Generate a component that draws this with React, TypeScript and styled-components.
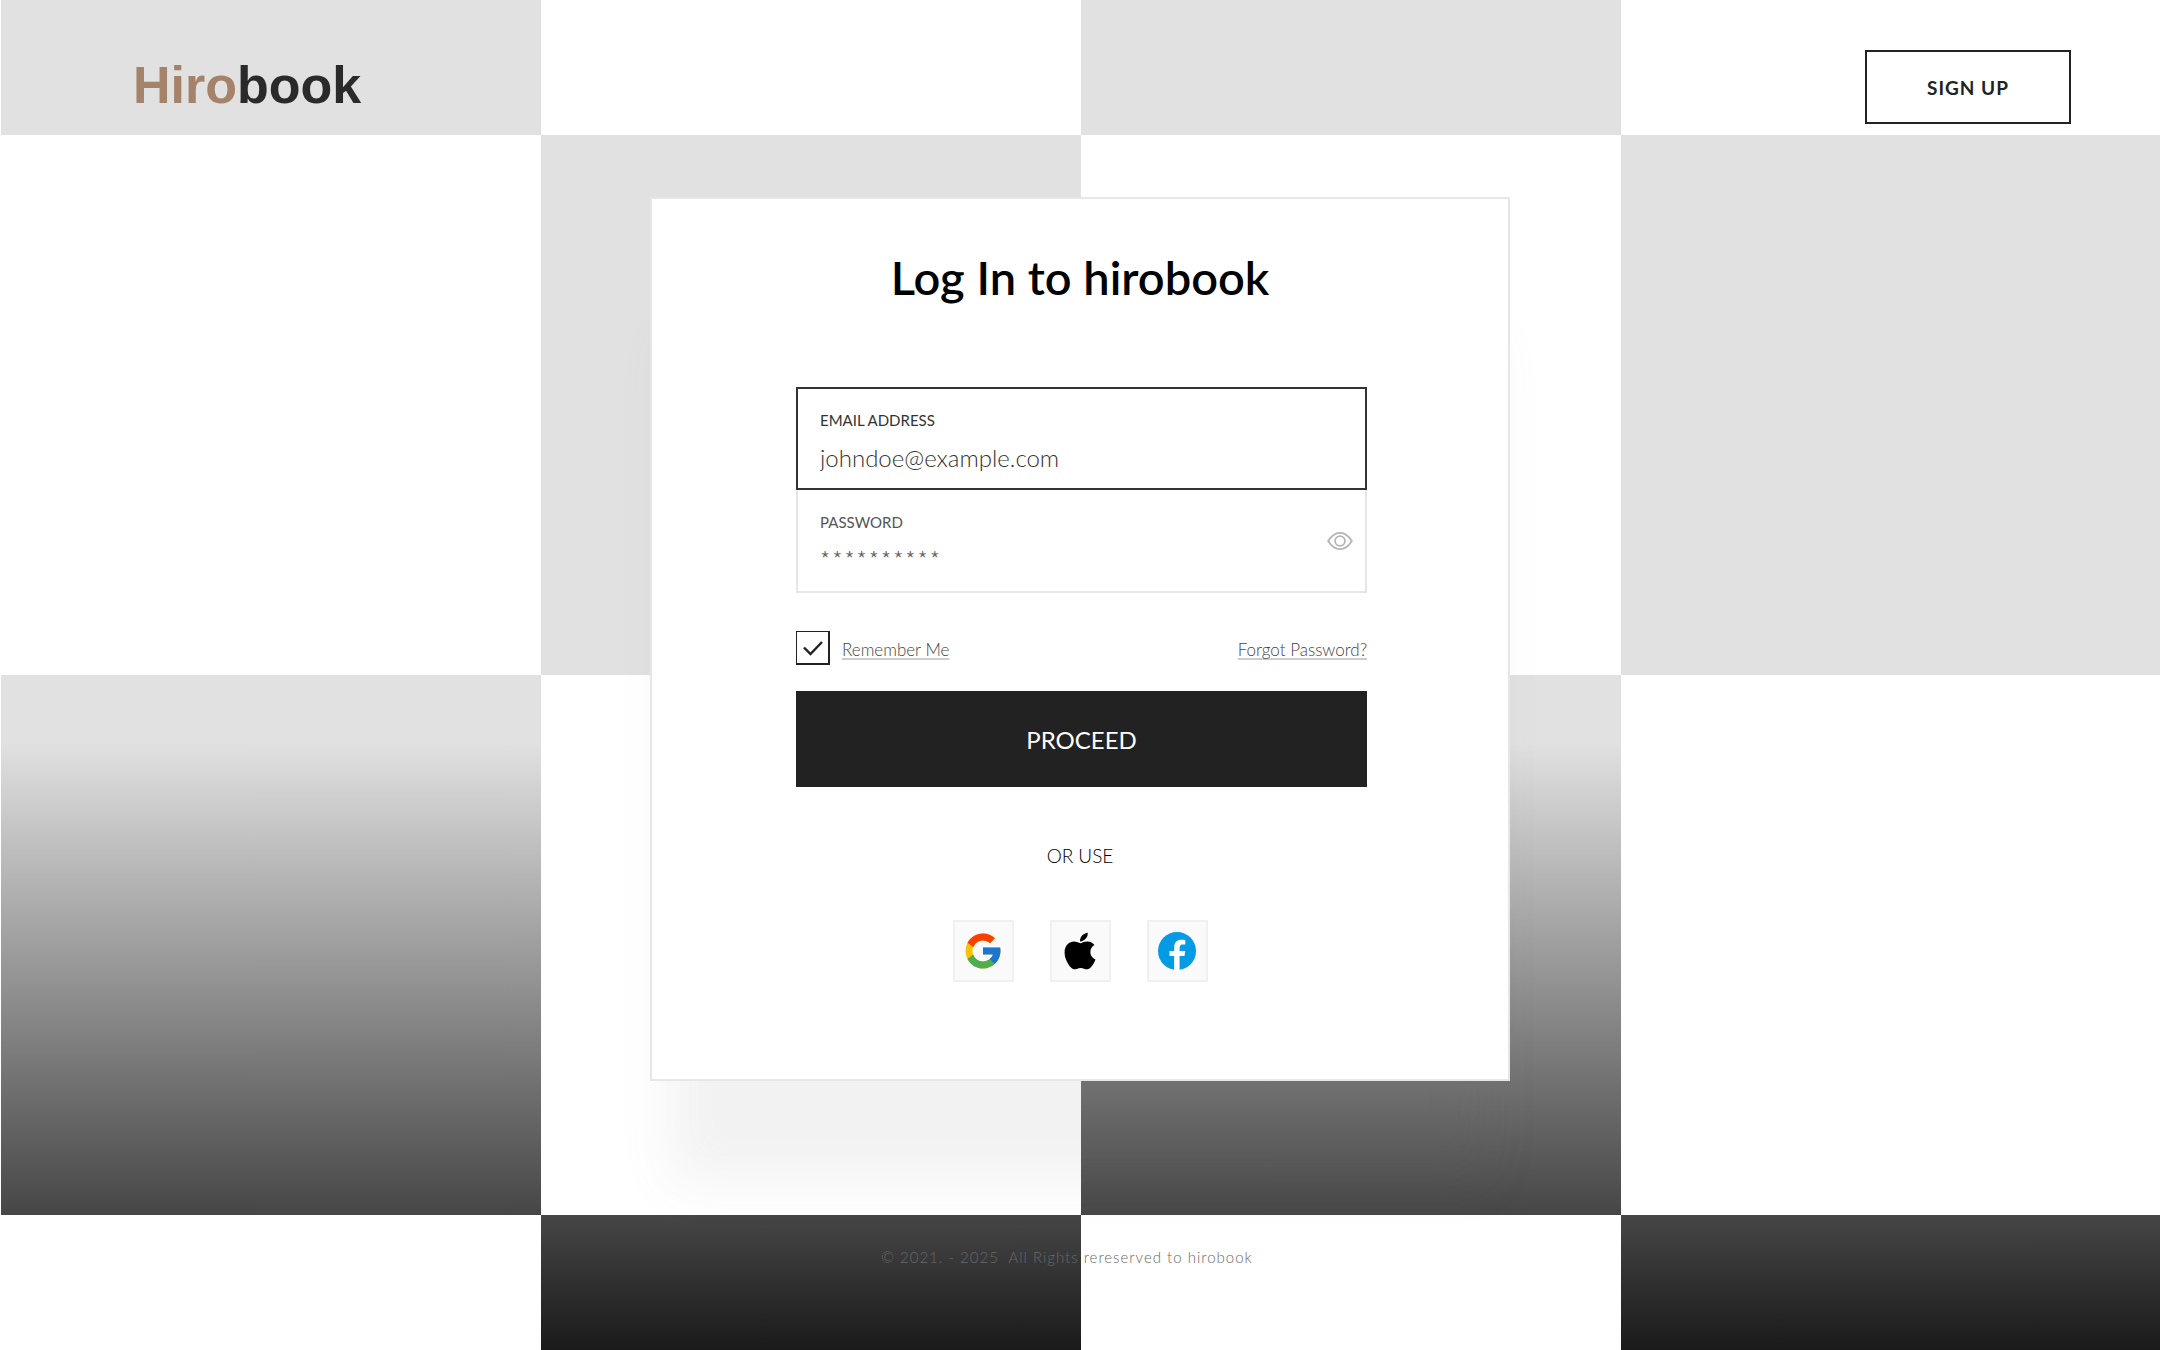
import React from "react";
import styled, { createGlobalStyle } from "styled-components";
import { FcGoogle } from "react-icons/fc";
import { FaApple } from "react-icons/fa";

const GlobalStyle = createGlobalStyle`
  *, *::before, *::after { box-sizing: border-box; }
  body { margin: 0; background: #fff; color: #000; font-family: Lato, "Noto Sans", sans-serif; }
  button, input { font: inherit; color: inherit; }
`;

const Page = styled.div`
  display: flex;
  flex-direction: column;
  min-height: 100vh;
  background:
    linear-gradient(#fff, #fff) 0 0 / 1px 100% no-repeat,
    conic-gradient(transparent 0 25%, #fff 0 50%, transparent 0 75%, #fff 0) 1px 135px / 50vw 50vw,
    linear-gradient(#e1e1e1 55%, #1a1a1a);
`;

const Header = styled.header`
  display: flex;
  align-items: flex-start;
  justify-content: space-between;
  padding: 50px 89px 0 133px;
`;

const Logo = styled.a`
  color: #2a2a2a;
  font: 700 52px/70px "Liberation Sans", Arial, sans-serif;
  text-decoration: none;
`;

const LogoAccent = styled.span`
  color: #a5826a;
`;

const SignUp = styled.button`
  width: 206px;
  height: 74px;
  border: 2px solid #222;
  background: #fff;
  color: #222;
  font-size: 19px;
  font-weight: 700;
  letter-spacing: 1px;
`;

const Main = styled.main`
  display: flex;
  justify-content: center;
  padding: 73px 16px 0;
`;

const Card = styled.section`
  display: flex;
  flex-direction: column;
  align-items: center;
  width: 100%;
  max-width: 860px;
  padding: 50px 0 97px;
  border: 2px solid #e6e6e6;
  background: #fff;
  box-shadow: 0 120px 50px -20px rgba(110, 110, 110, 0.09);
`;

const Title = styled.h1`
  margin: 0 0 82px;
  font-size: 47px;
  font-weight: 600;
  line-height: 56px;
`;

const Form = styled.form`
  align-self: stretch;
  display: flex;
  flex-direction: column;
  padding: 0 141px 0 144px;
`;

const Field = styled.div<{ $active?: boolean }>`
  display: flex;
  align-items: center;
  justify-content: space-between;
  height: 103px;
  padding: 0 12px 0 22px;
  border: 2px solid ${(p) => (p.$active ? "#333" : "#e6e6e6")};
  border-top-width: ${(p) => (p.$active ? 2 : 0)}px;
`;

const FieldText = styled.div`
  flex: 1;
  display: flex;
  flex-direction: column;
  gap: 13px;
  padding-top: 6px;
`;

const FieldLabel = styled.label<{ $muted?: boolean }>`
  color: ${(p) => (p.$muted ? "#555" : "#333")};
  font-size: 15px;
  line-height: 18px;
`;

const TextInput = styled.input`
  width: 100%;
  height: 30px;
  padding: 0;
  border: 0;
  outline: 0;
  background: transparent;
  font-size: 24px;
  font-weight: 300;
  &::placeholder { color: #333; opacity: 1; }
`;

const PasswordInput = styled(TextInput)`
  font-family: "Noto Sans CJK JP", sans-serif;
  font-size: 23px;
  letter-spacing: 2px;
  &::placeholder { color: #666; }
`;

const IconButton = styled.button`
  display: flex;
  padding: 0;
  border: 0;
  background: none;
`;

const Options = styled.div`
  display: flex;
  align-items: flex-end;
  justify-content: space-between;
  margin: 38px 0 26px;
  color: #444;
  font-size: 17px;
  font-weight: 300;
  line-height: 30px;
`;

const Remember = styled.label`
  display: flex;
  align-items: flex-end;
  gap: 12px;
`;

const CheckWrap = styled.span`
  display: grid;
  place-items: center;
  & > * { grid-area: 1 / 1; }
  & > svg { pointer-events: none; }
  & > input:not(:checked) + svg { visibility: hidden; }
`;

const Checkbox = styled.input`
  appearance: none;
  width: 34px;
  height: 34px;
  margin: 0;
  border: solid #222;
  border-width: 1px 2px 2px 1px;
  background: #fff;
`;

const Underlined = styled.span`
  text-decoration: underline 2px #ccc;
  text-underline-offset: 2px;
  text-decoration-skip-ink: none;
`;

const Forgot = styled(Underlined).attrs({ as: "a" })<{ href: string }>`
  color: inherit;
`;

const Proceed = styled.button`
  height: 96px;
  border: 0;
  background: #222;
  color: #fff;
  font-size: 24px;
`;

const Divider = styled.p`
  margin: 57px 0 52px;
  font-size: 19px;
  font-weight: 300;
  line-height: 24px;
`;

const Socials = styled.div`
  display: flex;
  gap: 36px;
`;

const SocialButton = styled.button`
  display: grid;
  place-items: center;
  width: 61px;
  height: 62px;
  padding: 0;
  border: 2px solid #f0f0f0;
  background: #fafafa;
  color: #000;
`;

const Footer = styled.footer`
  padding: 166px 26px 24px 0;
  color: #686868;
  font-size: 15px;
  font-weight: 300;
  line-height: 20px;
  letter-spacing: 1px;
  text-align: center;
  white-space: pre-wrap;
`;

function EyeIcon() {
  return (
    <svg width="26" height="20" viewBox="0 0 26 20" fill="none" stroke="#b4b4b4" strokeWidth="1.8">
      <path d="M1.2 10C4.5 4.5 8.5 1.8 13 1.8S21.5 4.5 24.8 10C21.5 15.5 17.5 18.2 13 18.2S4.5 15.5 1.2 10Z" />
      <circle cx="13" cy="10" r="4.9" />
    </svg>
  );
}

function CheckIcon() {
  return (
    <svg width="22" height="18" viewBox="0 0 22 18" fill="none" stroke="#222" strokeWidth="2.4">
      <path d="M2 8.5 8.5 15 20 3" />
    </svg>
  );
}

function FacebookIcon() {
  return (
    <svg width="48" height="48" viewBox="0 0 48 48">
      <circle cx="24" cy="24" r="19" fill="#039be5" />
      <path
        fill="#fff"
        d="M26.572 29.036h4.917l.772-4.995h-5.69v-2.73c0-2.075.678-3.915 2.619-3.915h3.119v-4.359c-.548-.074-1.707-.236-3.897-.236-4.573 0-7.254 2.415-7.254 7.917v3.323h-4.701v4.995h4.701v13.729C22.089 42.905 23.032 43 24 43c.875 0 1.729-.08 2.572-.194V29.036z"
      />
    </svg>
  );
}

export default function App() {
  return (
    <Page>
      <GlobalStyle />
      <Header>
        <Logo href="#home">
          <LogoAccent>Hiro</LogoAccent>book
        </Logo>
        <SignUp type="button">SIGN UP</SignUp>
      </Header>
      <Main>
        <Card>
          <Title>Log In to hirobook</Title>
          <Form onSubmit={(e) => e.preventDefault()}>
            <Field $active>
              <FieldText>
                <FieldLabel htmlFor="email">EMAIL ADDRESS</FieldLabel>
                <TextInput id="email" type="email" placeholder="johndoe@example.com" />
              </FieldText>
            </Field>
            <Field>
              <FieldText>
                <FieldLabel htmlFor="password" $muted>PASSWORD</FieldLabel>
                <PasswordInput id="password" type="password" placeholder="**********" />
              </FieldText>
              <IconButton type="button" aria-label="Show password">
                <EyeIcon />
              </IconButton>
            </Field>
            <Options>
              <Remember>
                <CheckWrap>
                  <Checkbox type="checkbox" defaultChecked />
                  <CheckIcon />
                </CheckWrap>
                <Underlined>Remember Me</Underlined>
              </Remember>
              <Forgot href="#forgot">Forgot Password?</Forgot>
            </Options>
            <Proceed type="submit">PROCEED</Proceed>
          </Form>
          <Divider>OR USE</Divider>
          <Socials>
            <SocialButton type="button" aria-label="Google"><FcGoogle size={42} /></SocialButton>
            <SocialButton type="button" aria-label="Apple"><FaApple size={42} /></SocialButton>
            <SocialButton type="button" aria-label="Facebook"><FacebookIcon /></SocialButton>
          </Socials>
        </Card>
      </Main>
      <Footer>{"© 2021. - 2025  All Rights rereserved to hirobook"}</Footer>
    </Page>
  );
}
